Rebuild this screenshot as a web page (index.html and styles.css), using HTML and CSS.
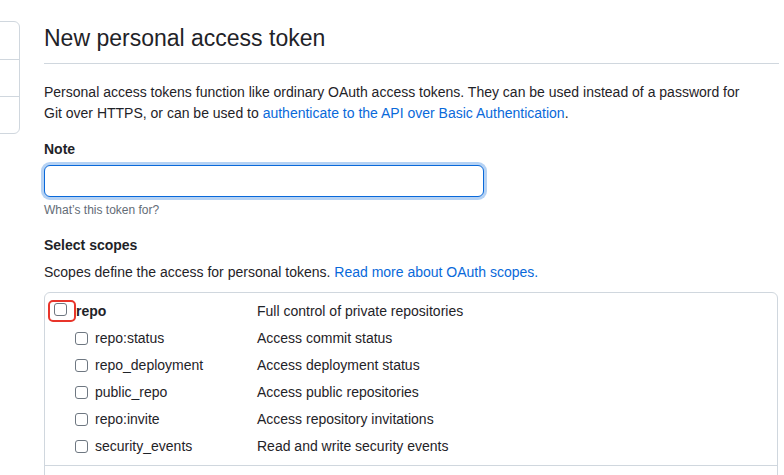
FILE: index.html
```html
<!DOCTYPE html>
<html>
<head>
<meta charset="utf-8">
<link rel="stylesheet" href="styles.css">
</head>
<body>
<div class="layout">
  <nav class="sidebar">
    <div class="side-item"></div>
    <div class="side-item"></div>
    <div class="side-item"></div>
  </nav>
  <main class="main">
    <h1 class="subhead">New personal access token</h1>
    <p class="intro">Personal access tokens function like ordinary OAuth access tokens. They can be used instead of a password for Git over HTTPS, or can be used to <a href="#">authenticate to the API over Basic Authentication</a>.</p>
    <label class="label">Note</label>
    <input class="note-input" type="text">
    <p class="hint">What’s this token for?</p>
    <h2 class="label scopes-title">Select scopes</h2>
    <p class="scopes-desc">Scopes define the access for personal tokens. <a href="#">Read more about OAuth scopes.</a></p>
    <div class="scope-box">
      <div class="scope-group">
        <div class="scope-row parent">
          <div class="scope-name"><span class="highlight"><span class="cb"></span></span><b>repo</b></div>
          <div class="scope-desc">Full control of private repositories</div>
        </div>
        <div class="scope-row child">
          <div class="scope-name"><span class="cb"></span>repo:status</div>
          <div class="scope-desc">Access commit status</div>
        </div>
        <div class="scope-row child">
          <div class="scope-name"><span class="cb"></span>repo_deployment</div>
          <div class="scope-desc">Access deployment status</div>
        </div>
        <div class="scope-row child">
          <div class="scope-name"><span class="cb"></span>public_repo</div>
          <div class="scope-desc">Access public repositories</div>
        </div>
        <div class="scope-row child">
          <div class="scope-name"><span class="cb"></span>repo:invite</div>
          <div class="scope-desc">Access repository invitations</div>
        </div>
        <div class="scope-row child">
          <div class="scope-name"><span class="cb"></span>security_events</div>
          <div class="scope-desc">Read and write security events</div>
        </div>
      </div>
      <div class="scope-group next"></div>
    </div>
  </main>
</div>
</body>
</html>
```

FILE: styles.css
```css
* { box-sizing: border-box; }
html, body {
  margin: 0;
  padding: 0;
  background: #ffffff;
  overflow: hidden;
}
body {
  font-family: "Liberation Sans", Arial, sans-serif;
  font-size: 14px;
  line-height: 1.5;
  color: #1f2328;
  width: 784px;
  height: 475px;
}
a { color: #0969da; text-decoration: none; }

.layout {
  display: flex;
  align-items: flex-start;
}
.sidebar {
  width: 200px;
  margin-left: -180px;
  margin-top: 21px;
  border: 1px solid #d0d7de;
  border-radius: 6px;
  flex-shrink: 0;
}
.side-item {
  height: 37px;
}
.side-item + .side-item {
  border-top: 1px solid #d0d7de;
}

.main {
  margin-left: 24px;
  width: 735px;
  flex-shrink: 0;
}
.subhead {
  margin: 23px 0 0;
  padding-bottom: 10px;
  font-size: 23px;
  font-weight: 400;
  line-height: 30px;
  border-bottom: 1px solid #d0d7de;
}
.intro {
  margin: 18px 0 0;
  line-height: 21px;
  max-width: 712px;
}
.label {
  display: block;
  margin: 15px 0 0;
  font-size: 14px;
  font-weight: 700;
  line-height: 21px;
}
.note-input {
  display: block;
  margin-top: 5px;
  width: 440px;
  height: 32px;
  border: 1px solid #0969da;
  border-radius: 6px;
  box-shadow: 0 0 0 3px rgba(9, 105, 218, 0.3);
  outline: none;
  font: inherit;
  padding: 5px 12px;
}
.hint {
  margin: 4px 0 0;
  font-size: 12px;
  line-height: 18px;
  color: #636c76;
}
.scopes-title {
  margin-top: 16px;
}
.scopes-desc {
  margin: 6px 0 0;
  line-height: 21px;
}
.scope-box {
  margin-top: 9px;
  border: 1px solid #d0d7de;
  border-radius: 6px;
  width: 734px;
}
.scope-group {
  padding: 5px 0 5px;
}
.scope-group.next {
  border-top: 1px solid #d0d7de;
  height: 40px;
}
.scope-row {
  display: flex;
  align-items: center;
  height: 27px;
}
.scope-name {
  display: flex;
  align-items: center;
  width: 212px;
  flex-shrink: 0;
}
.parent .scope-name { padding-left: 3px; }
.child .scope-name { padding-left: 30px; }
.scope-desc {
  color: #1f2328;
}
.cb {
  display: inline-block;
  width: 13px;
  height: 13px;
  border: 1px solid #6e7781;
  border-radius: 3px;
  background: #fff;
  margin-right: 7px;
}
.highlight {
  display: inline-flex;
  align-items: center;
  justify-content: center;
  width: 28px;
  height: 22px;
  border: 2px solid #e8352b;
  border-radius: 5px;
  position: relative;
  top: -1px;
}
.highlight .cb {
  margin: 0 3px 3px 0;
}
b { font-weight: 700; }
```
